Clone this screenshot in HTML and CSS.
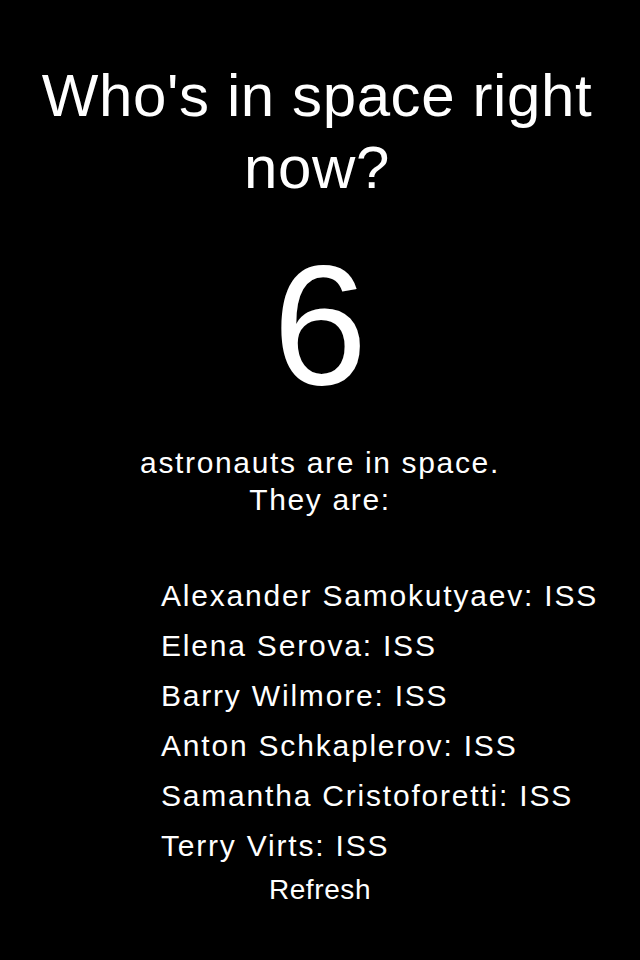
FILE: index.html
```html
<!DOCTYPE html>
<html lang="en">
<head>
<meta charset="utf-8">
<title>Who's in space right now?</title>
<link rel="stylesheet" href="styles.css">
</head>
<body>
<main class="screen">
  <h1 class="title">Who's in space right now?</h1>
  <div class="count">6</div>
  <p class="caption">astronauts are in space.<br>They are:</p>
  <ul class="people">
    <li>Alexander Samokutyaev: ISS</li>
    <li>Elena Serova: ISS</li>
    <li>Barry Wilmore: ISS</li>
    <li>Anton Schkaplerov: ISS</li>
    <li>Samantha Cristoforetti: ISS</li>
    <li>Terry Virts: ISS</li>
  </ul>
  <button class="refresh" type="button">Refresh</button>
</main>
</body>
</html>
```
FILE: styles.css
```css
html, body {
  margin: 0;
  padding: 0;
  background: #000;
}
body {
  color: #fff;
  font-family: "Liberation Sans", Arial, Helvetica, sans-serif;
  width: 640px;
  height: 960px;
  overflow: hidden;
}
.screen {
  display: flex;
  flex-direction: column;
  align-items: stretch;
  padding-top: 60px;
}
.title {
  margin: 0;
  font-weight: normal;
  font-size: 60px;
  line-height: 72px;
  letter-spacing: 0.6px;
  text-align: center;
  padding: 0 24px 0 18px;
}
.count {
  margin-top: 37px;
  font-size: 170px;
  line-height: 168px;
  text-align: center;
}
.caption {
  margin: 35px 0 0;
  font-size: 30px;
  line-height: 37px;
  letter-spacing: 1.65px;
  text-align: center;
}
.people {
  list-style: none;
  margin: 53px 0 0;
  padding: 0 0 0 161px;
  font-size: 30px;
  line-height: 50px;
  letter-spacing: 1.8px;
  white-space: nowrap;
}
.refresh {
  align-self: center;
  margin-top: 3px;
  padding: 0;
  border: 0;
  background: none;
  color: #fff;
  font-family: inherit;
  font-size: 28px;
  line-height: 32px;
  letter-spacing: 0.6px;
}
```
